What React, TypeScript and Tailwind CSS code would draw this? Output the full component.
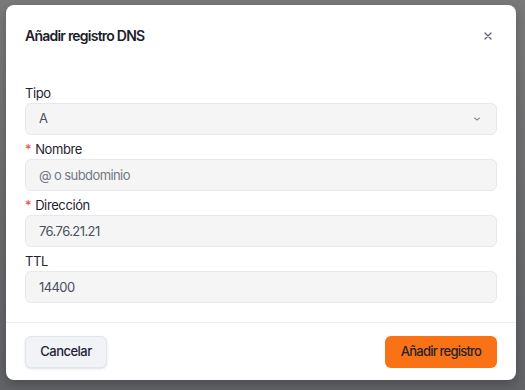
import React from 'react';

const Field: React.FC<{ label: string; required?: boolean; children: React.ReactNode }> = ({ label, required, children }) => (
  <div className="flex flex-col">
    <label className="h-5 flex items-center pt-[2px] text-[13px] tracking-[-0.03em] text-[#1f2330]">
      {required && <span className="text-[#ef4444] mr-1">*</span>}
      {label}
    </label>
    {children}
  </div>
);

const inputCls =
  'h-8 w-full rounded-md border border-[#e6e8eb] bg-[#f5f5f6] pl-[13px] pr-3 text-[13px] tracking-[-0.045em] text-[#4a4f5c] outline-none placeholder:text-[#737884]';

export default function App() {
  return (
    <div
      className="w-[525px] h-[390px] overflow-hidden bg-gradient-to-b from-[#7a7a7a] to-[#626367] pt-[5px] pl-[6px]"
      style={{ fontFamily: 'Inter, "Noto Sans", sans-serif' }}
    >
      <div className="w-[510px] h-[375px] bg-white rounded-lg flex flex-col shadow-[0_4px_12px_rgba(0,0,0,0.25)]">
        <div className="flex items-center justify-between pl-[19px] pr-[20px] pt-[21px]">
          <h2 className="h-5 leading-5 text-[14px] font-semibold tracking-[-0.055em] text-[#1b1d29]">Añadir registro DNS</h2>
          <button className="w-4 h-4 flex items-center justify-center text-[#5b6070]">
            <svg width="8" height="8" viewBox="0 0 8 8" fill="none" stroke="currentColor" strokeWidth="1.3" strokeLinecap="round">
              <path d="M1 1l6 6M7 1L1 7" />
            </svg>
          </button>
        </div>

        <div className="flex flex-col gap-1 px-[19px] mt-[37px] pb-[19px]">
          <Field label="Tipo">
            <div className={`${inputCls} flex items-center justify-between text-[#1f2330]`}>
              <span>A</span>
              <svg width="8" height="6" viewBox="0 0 8 6" fill="none" stroke="#8a8f9a" strokeWidth="1.1" strokeLinecap="round" strokeLinejoin="round" className="mr-[3px]">
                <path d="M1.5 2l2.5 2 2.5-2" />
              </svg>
            </div>
          </Field>
          <Field label="Nombre" required>
            <input className={inputCls} placeholder="@ o subdominio" />
          </Field>
          <Field label="Dirección" required>
            <input className={inputCls} defaultValue="76.76.21.21" />
          </Field>
          <Field label="TTL">
            <input className={inputCls} defaultValue="14400" />
          </Field>
        </div>

        <div className="border-t border-[#e7edf3] flex items-center justify-between px-[19px] pt-[13px]">
          <button className="h-8 w-[82px] rounded-md border border-[#e2e5ea] bg-[#f1f3f7] text-[13px] font-medium tracking-[-0.04em] text-[#1f2330] shadow-sm">
            Cancelar
          </button>
          <button className="h-8 w-[112px] rounded-md bg-[#f97316] text-[13px] font-medium tracking-[-0.06em] text-[#1f2330]">
            Añadir registro
          </button>
        </div>
      </div>
    </div>
  );
}
